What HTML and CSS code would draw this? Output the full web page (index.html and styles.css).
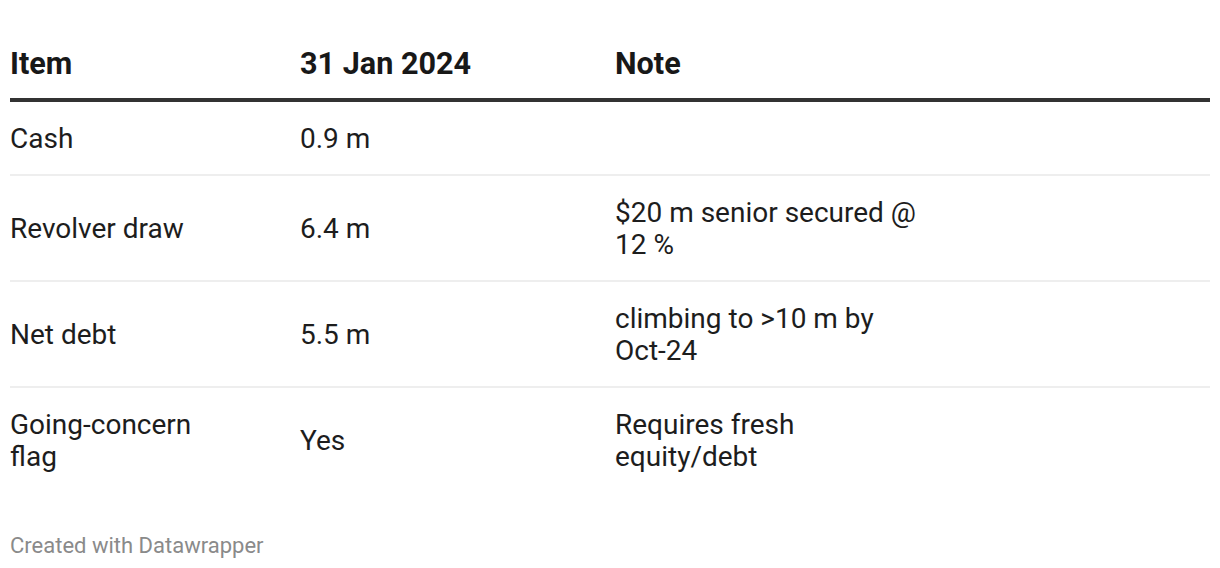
FILE: index.html
```html
<!DOCTYPE html>
<html>
<head>
<meta charset="utf-8">
<link rel="stylesheet" href="styles.css">
</head>
<body>
<div class="chart">
  <table class="tbl">
    <thead>
      <tr>
        <th class="c1">Item</th>
        <th class="c2">31 Jan 2024</th>
        <th class="c3">Note</th>
      </tr>
    </thead>
    <tbody>
      <tr>
        <td class="c1"><span class="txt">Cash</span></td>
        <td class="c2">0.9 m</td>
        <td class="c3"><span class="txt note"></span></td>
      </tr>
      <tr>
        <td class="c1"><span class="txt">Revolver draw</span></td>
        <td class="c2">6.4 m</td>
        <td class="c3"><span class="txt note">$20 m senior secured @ 12 %</span></td>
      </tr>
      <tr>
        <td class="c1"><span class="txt">Net debt</span></td>
        <td class="c2">5.5 m</td>
        <td class="c3"><span class="txt note">climbing to &gt;10 m by <span class="nw">Oct-24</span></span></td>
      </tr>
      <tr class="last">
        <td class="c1"><span class="txt item">Going-concern flag</span></td>
        <td class="c2">Yes</td>
        <td class="c3"><span class="txt note">Requires fresh equity/debt</span></td>
      </tr>
    </tbody>
  </table>
  <div class="footer">Created with Datawrapper</div>
</div>
</body>
</html>
```
FILE: styles.css
```css
html, body {
  margin: 0;
  padding: 0;
  background: #ffffff;
}
body {
  font-family: Roboto, "Liberation Sans", sans-serif;
  color: #1d1d1d;
}
.chart {
  padding: 0 10px;
}
.tbl {
  width: 1200px;
  border-collapse: collapse;
  table-layout: fixed;
  margin-top: 40px;
}
.tbl th {
  font-weight: 700;
  font-size: 30.6px;
  line-height: 32px;
  text-align: left;
  padding: 8px 0 18px 0;
  border-bottom: 4px solid #333333;
  color: #181818;
}
.tbl td {
  font-size: 28px;
  line-height: 32px;
  padding: 21px 0 19px 0;
  border-bottom: 2px solid #eeeeee;
  vertical-align: middle;
  text-align: left;
}
.tbl tr.last td {
  border-bottom: none;
}
.c1 { width: 290px; }
.c2 { width: 315px; }
.c3 { width: auto; }
.txt { display: inline-block; }
.nw { white-space: nowrap; }
.item { max-width: 220px; }
.note { max-width: 308px; }
.footer {
  margin-top: 42px;
  font-size: 22px;
  color: #8a8a8a;
  line-height: 24px;
}
```
